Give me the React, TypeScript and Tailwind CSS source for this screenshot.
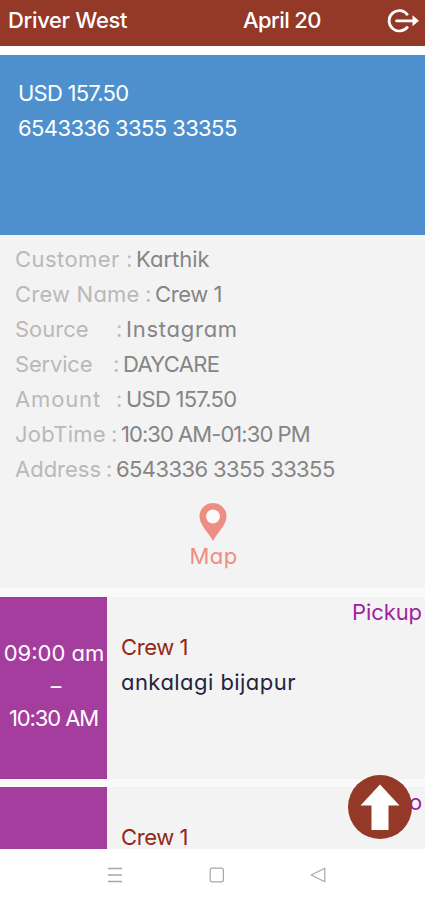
import React from 'react';

interface Detail {
  label: string;
  value: string;
  labelClass: string;
  valueClass: string;
}

const details: Detail[] = [
  { label: 'Customer', value: 'Karthik', labelClass: 'w-[111px] tracking-[0.45px]', valueClass: 'tracking-normal' },
  { label: 'Crew Name', value: 'Crew 1', labelClass: 'w-[130px] tracking-[0.2px]', valueClass: 'tracking-[-0.4px]' },
  { label: 'Source', value: 'Instagram', labelClass: 'w-[101px] tracking-normal', valueClass: 'tracking-[0.75px]' },
  { label: 'Service', value: 'DAYCARE', labelClass: 'w-[98px] tracking-[-0.2px]', valueClass: 'tracking-[-0.7px]' },
  { label: 'Amount', value: 'USD 157.50', labelClass: 'w-[101px] tracking-[0.85px]', valueClass: 'tracking-[-0.75px]' },
  { label: 'JobTime', value: '10:30 AM-01:30 PM', labelClass: 'w-[96px] tracking-[0.25px]', valueClass: 'tracking-[-0.95px]' },
  { label: 'Address', value: '6543336 3355 33355', labelClass: 'w-[91px] tracking-normal', valueClass: 'tracking-[-0.6px]' },
];

const Header: React.FC = () => (
  <header className="flex h-[46px] shrink-0 items-start bg-[#943828] pl-[8px] pt-[3px] font-medium text-white">
    <h1 className="w-[235px] tracking-[-0.35px]">Driver West</h1>
    <span className="w-[143px] tracking-[-0.6px]">April 20</span>
    <svg className="mt-[5px] h-[26px] w-[34px]" viewBox="0 0 34 26" fill="none" stroke="currentColor" strokeWidth="2.7">
      <path d="M21.8 7.2A10.2 10.2 0 1 0 21.8 18.4" />
      <path d="M10.5 12.8H28" strokeLinecap="round" />
      <path d="M26.5 7.3L33 12.8L26.5 18.3Z" fill="currentColor" stroke="none" />
    </svg>
  </header>
);

const JobDetails: React.FC = () => (
  <section className="h-[353px] shrink-0 bg-[#f3f3f3] pt-[7px]">
    {details.map((item) => (
      <div key={item.label} className="flex whitespace-nowrap pl-[15px] text-[#b9b9b9]">
        <span className={item.labelClass}>{item.label}</span>
        <span className="w-[10px]">:</span>
        <span className={`text-[#858585] ${item.valueClass}`}>{item.value}</span>
      </div>
    ))}
    <div className="mt-[16px] flex flex-col items-center text-[#ee8d84]">
      <svg className="h-[38px] w-[28px]" viewBox="0 0 28 38">
        <path
          d="M14 0C6.4 0 .5 6 .5 13.3C.5 22.8 9.5 29 14 38C18.5 29 27.5 22.8 27.5 13.3C27.5 6 21.6 0 14 0Z"
          fill="currentColor"
        />
        <circle cx="14" cy="13.5" r="6.9" fill="#fafafa" />
      </svg>
      <span className="-mt-[2px] pl-[2px] tracking-[0.4px]">Map</span>
    </div>
  </section>
);

interface StopProps {
  kind: string;
  crew: string;
  place?: string;
  from?: string;
  to?: string;
}

const Stop: React.FC<StopProps> = ({ kind, crew, place, from, to }) => (
  <article className="flex h-[182px] shrink-0 bg-[#f3f3f3]">
    <div className="flex w-[107px] flex-col items-center whitespace-nowrap bg-[#a53d9f] pt-[39px] text-white">
      {from && to && (
        <>
          <span className="h-[33px] pl-[1px] tracking-normal">{from}</span>
          <span className="h-[32px] scale-x-150 pl-[4px]">-</span>
          <span className="tracking-[-1.1px]">{to}</span>
        </>
      )}
    </div>
    <div className="flex flex-1 flex-col pl-[14px]">
      <span className="-mt-[2px] pr-[3px] text-right tracking-[-0.1px] text-[#a01f9e]">{kind}</span>
      <span className="tracking-[-0.4px] text-[#932718]">{crew}</span>
      {place && <span className="tracking-[0.45px] text-[#25233e]">{place}</span>}
    </div>
  </article>
);

const App: React.FC = () => {
  return (
    <div className="relative flex h-[900px] w-[425px] flex-col overflow-hidden bg-white font-['Inter',sans-serif] text-[22px] leading-[35px] [font-feature-settings:'cv11']">
      <Header />

      <div className="mt-[9px] h-[180px] shrink-0 bg-[#4e90cd] pl-[18px] pt-[21px] text-white">
        <p className="tracking-[-0.75px]">USD 157.50</p>
        <p className="tracking-[-0.6px]">6543336 3355 33355</p>
      </div>

      <JobDetails />

      {/* Stops list, cut off by the navigation bar */}
      <main className="flex h-[261px] shrink-0 flex-col gap-[8px] overflow-hidden bg-[#fafafa] pt-[9px]">
        <Stop kind="Pickup" crew="Crew 1" place="ankalagi bijapur" from="09:00 am" to="10:30 AM" />
        <Stop kind="to" crew="Crew 1" />
      </main>

      <button className="absolute left-[348px] top-[775px] flex h-[64px] w-[64px] items-center justify-center rounded-full bg-[#943828]">
        <svg className="h-[46px] w-[40px]" viewBox="0 0 40 46" fill="white">
          <path d="M20 .5L39.5 21.5H28.5V46H11.5V21.5H.5Z" />
        </svg>
      </button>

      <nav className="flex h-[51px] shrink-0 items-start justify-start bg-white pl-[107px] pt-[18px] text-[#a8a8a8]">
        <svg className="h-[16px] w-[16px]" viewBox="0 0 16 16" stroke="currentColor" strokeWidth="1.3">
          <path d="M1 1.5H15M1 8H15M1 14.5H15" />
        </svg>
        <svg className="ml-[86px] h-[16px] w-[16px]" viewBox="0 0 16 16" fill="none" stroke="currentColor" strokeWidth="1.2">
          <rect x="1.2" y="1.2" width="13.2" height="13.6" rx="2" />
        </svg>
        <svg className="ml-[85px] h-[16px] w-[16px]" viewBox="0 0 16 16" fill="none" stroke="currentColor" strokeWidth="1.2" strokeLinejoin="round">
          <path d="M1.2 8L14.8 1.2V14.8Z" />
        </svg>
      </nav>
    </div>
  );
};

export default App;
